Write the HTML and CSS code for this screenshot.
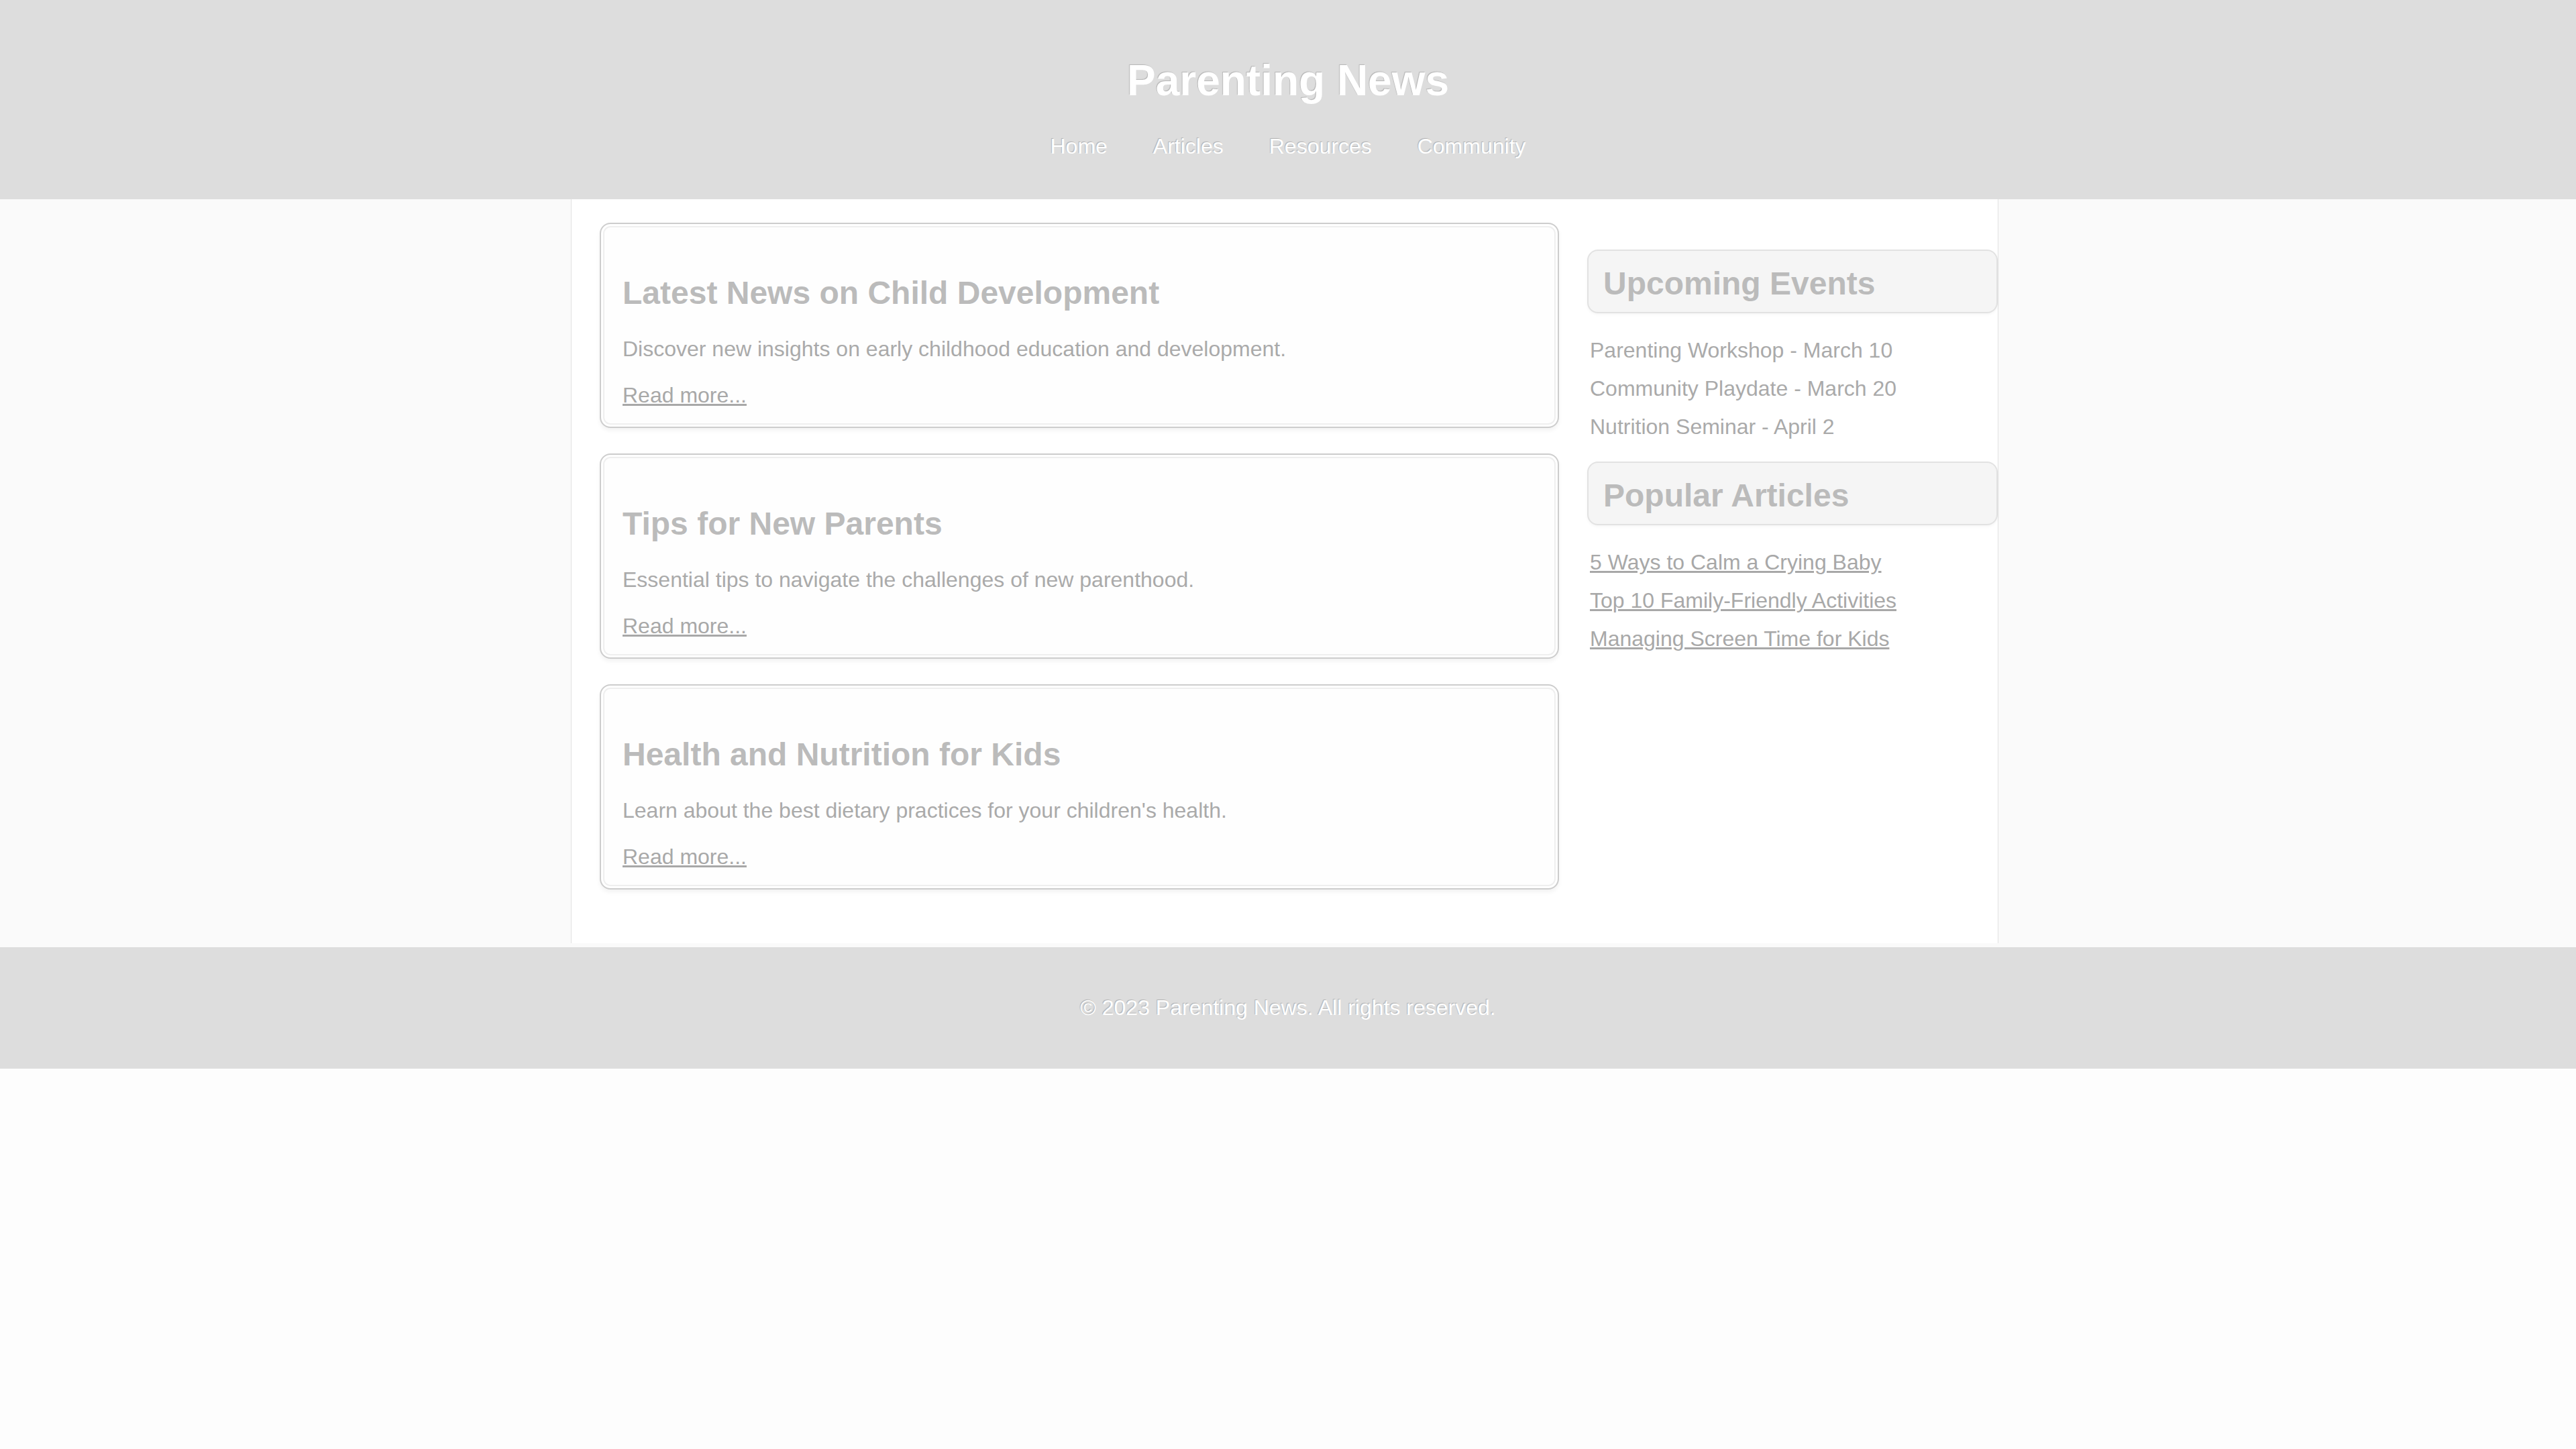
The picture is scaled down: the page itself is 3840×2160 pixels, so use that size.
FILE: index.html
```html
<!DOCTYPE html>
<html lang="en">
<head>
<meta charset="utf-8">
<title>Parenting News</title>
<link rel="stylesheet" href="styles.css">
</head>
<body>
<header class="site-header">
  <h1 class="site-title">Parenting News</h1>
  <nav class="site-nav">
    <a href="#">Home</a>
    <a href="#">Articles</a>
    <a href="#">Resources</a>
    <a href="#">Community</a>
  </nav>
</header>
<div class="container">
  <main class="main">
    <article class="card">
      <h2 class="card-title">Latest News on Child Development</h2>
      <p class="card-text">Discover new insights on early childhood education and development.</p>
      <a class="card-link" href="#">Read more...</a>
    </article>
    <article class="card">
      <h2 class="card-title">Tips for New Parents</h2>
      <p class="card-text">Essential tips to navigate the challenges of new parenthood.</p>
      <a class="card-link" href="#">Read more...</a>
    </article>
    <article class="card">
      <h2 class="card-title">Health and Nutrition for Kids</h2>
      <p class="card-text">Learn about the best dietary practices for your children's health.</p>
      <a class="card-link" href="#">Read more...</a>
    </article>
  </main>
  <aside class="sidebar">
    <section class="side-section">
      <h3 class="side-title">Upcoming Events</h3>
      <ul class="side-list">
        <li>Parenting Workshop - March 10</li>
        <li>Community Playdate - March 20</li>
        <li>Nutrition Seminar - April 2</li>
      </ul>
    </section>
    <section class="side-section">
      <h3 class="side-title">Popular Articles</h3>
      <ul class="side-list">
        <li><a href="#">5 Ways to Calm a Crying Baby</a></li>
        <li><a href="#">Top 10 Family-Friendly Activities</a></li>
        <li><a href="#">Managing Screen Time for Kids</a></li>
      </ul>
    </section>
  </aside>
</div>
<footer class="site-footer">
  <p class="footer-text">&copy; 2023 Parenting News. All rights reserved.</p>
</footer>
</body>
</html>
```
FILE: styles.css
```css
html {
  background: #fdfdfd;
}
body {
  margin: 0;
  background: #fafafa;
  font-family: "Liberation Sans", Arial, sans-serif;
  font-size: 32px;
  color: #aaaaaa;
}
.site-header {
  background: #dddddd;
  padding: 40px 0 60px;
  text-align: center;
}
.site-title {
  margin: 43px 0;
  font-size: 64px;
  font-weight: bold;
  color: #ffffff;
  line-height: 74px;
  text-shadow: -1px -1px 1px rgba(0, 0, 0, 0.18);
}
.site-nav {
  display: flex;
  justify-content: center;
  gap: 68px;
  line-height: 37px;
}
.site-nav a {
  color: #ffffff;
  text-decoration: none;
  text-shadow: -1px -1px 1px rgba(0, 0, 0, 0.2);
}
.container {
  width: 2128px;
  box-sizing: border-box;
  margin: 0 0 6px calc(50% - 1069px);
  background: #ffffff;
  border-left: 1px solid #e2e2e2;
  border-right: 1px solid #e2e2e2;
  padding: 35px 0 42px 42px;
  display: grid;
  grid-template-columns: 1fr 612px;
  column-gap: 42px;
  align-items: start;
}
.card {
  background: #fefefe;
  border: 2px solid #cdcdcd;
  border-radius: 16px;
  box-shadow: inset 0 0 0 3px #ffffff, inset 0 0 0 5px #efefef, 0 4px 6px rgba(0, 0, 0, 0.05);
  padding: 30px 32px 28px;
  margin-bottom: 38px;
}
.card-title {
  margin: 45px 0 38px;
  font-size: 48px;
  line-height: 55px;
  font-weight: bold;
  color: #bbbbbb;
}
.card-text {
  margin: 0 0 32px;
  line-height: 37px;
  color: #aaaaaa;
}
.card-link {
  display: block;
  width: max-content;
  line-height: 37px;
  color: #a8a8a8;
  text-decoration: underline;
}
.sidebar {
  padding-top: 40px;
}
.side-section {
  margin-bottom: 23px;
}
.side-title {
  margin: 0 0 27px;
  font-size: 48px;
  line-height: 55px;
  font-weight: bold;
  color: #bbbbbb;
  background: #f5f5f5;
  border: 2px solid #e2e2e2;
  border-radius: 16px;
  padding: 21px 22px 15px;
  box-shadow: 0 2px 4px rgba(0, 0, 0, 0.04);
}
.side-list {
  list-style: none;
  margin: 0;
  padding: 0 0 0 4px;
}
.side-list li {
  padding: 10px 0;
  line-height: 37px;
  color: #aaaaaa;
}
.side-list a {
  color: #a8a8a8;
  text-decoration: underline;
}
.site-footer {
  background: #dddddd;
  padding: 40px 0;
  text-align: center;
}
.footer-text {
  margin: 32px 0;
  line-height: 37px;
  color: #ffffff;
  text-shadow: -1px -1px 1px rgba(0, 0, 0, 0.2);
}
```
